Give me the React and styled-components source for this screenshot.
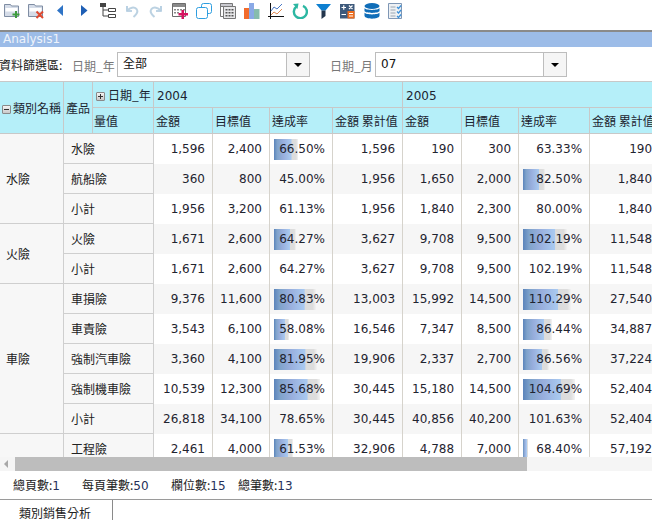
import React from "react";
import styled, { createGlobalStyle } from "styled-components";

const GlobalStyle = createGlobalStyle`
  html, body {
    margin: 0;
    padding: 0;
    background: #fff;
    overflow: hidden;
  }
  body {
    font-family: "DejaVu Sans", "Noto Sans CJK TC", sans-serif;
    font-size: 12px;
    color: #222;
  }
`;

const Page = styled.div`
  width: 652px;
  height: 520px;
  display: flex;
  flex-direction: column;
  overflow: hidden;
`;

const Toolbar = styled.div`
  height: 32px;
  flex: none;
  display: flex;
  align-items: flex-start;
  padding-top: 3px;
  box-sizing: border-box;
  border-bottom: 2px solid #8a8a8a;
`;

const ToolSlot = styled.span`
  width: 24px;
  height: 16px;
  flex: none;
  display: flex;
  justify-content: center;
  svg {
    display: block;
    width: 16px;
    height: 16px;
  }
`;

const TitleBar = styled.div`
  height: 15px;
  flex: none;
  background: #9cbce8;
  color: #eef3fb;
  padding-left: 3px;
  line-height: 15px;
  font-size: 12px;
`;

const FilterRow = styled.div`
  height: 34px;
  flex: none;
  display: flex;
  align-items: center;
  box-sizing: border-box;
  padding-top: 1px;
`;

const FilterTitle = styled.span`
  width: 73px;
  margin-left: -1px;
  flex: none;
  font-family: "Noto Sans CJK TC", sans-serif;
  white-space: nowrap;
  color: #222;
`;

const FilterLabel = styled.span`
  flex: none;
  width: ${(p) => p.$w}px;
  margin-left: ${(p) => p.$ml || 0}px;
  padding-top: 1px;
  font-family: "Noto Sans CJK TC", sans-serif;
  color: #777;
  white-space: nowrap;
`;

const SelectBox = styled.div`
  width: ${(p) => p.$w}px;
  height: 25px;
  flex: none;
  box-sizing: border-box;
  border: 1px solid #bdbdbd;
  display: flex;
  background: #fff;
`;

const SelectValue = styled.span`
  flex: 1;
  padding-left: 5px;
  line-height: 23px;
  font-family: "DejaVu Sans", "Noto Sans CJK TC", sans-serif;
  color: #111;
`;

const SelectButton = styled.span`
  width: 22px;
  flex: none;
  border-left: 1px solid #bdbdbd;
  background: #f5f5f5;
  display: flex;
  align-items: center;
  justify-content: center;
  &::after {
    content: "";
    border-left: 4px solid transparent;
    border-right: 4px solid transparent;
    border-top: 4px solid #000;
  }
`;

const GridWrap = styled.div`
  height: 375px;
  flex: none;
  overflow: hidden;
  border-top: 1px solid #c8c8c8;
`;

const Grid = styled.table`
  border-collapse: separate;
  border-spacing: 0;
  table-layout: fixed;
  width: 660px;
  font-size: 12px;
`;

const HeadCell = styled.th`
  height: 25px;
  padding: 0 0 0 ${(p) => p.$pl ?? 3}px;
  box-sizing: content-box;
  background: #b5eff9;
  border-right: 1px solid #c8c8c8;
  border-bottom: 1px solid #c8c8c8;
  font-weight: normal;
  text-align: left;
  white-space: nowrap;
  overflow: hidden;
  color: #1c2430;
  font-family: "Noto Sans CJK TC", sans-serif;
`;

const YearText = styled.span`
  font-family: "DejaVu Sans", sans-serif;
`;

const Toggle = styled.span`
  display: inline-block;
  width: 9px;
  height: 9px;
  box-sizing: border-box;
  border: 1px solid #8a8a8a;
  border-radius: 1px;
  background: linear-gradient(#f4f4f4, #c9c9c9);
  margin-right: ${(p) => p.$mr}px;
  vertical-align: -1px;
  position: relative;
  &::before {
    content: "";
    position: absolute;
    left: 1px;
    right: 1px;
    top: 3px;
    height: 1px;
    background: #333;
  }
  &::after {
    content: "";
    display: ${(p) => (p.$plus ? "block" : "none")};
    position: absolute;
    top: 1px;
    bottom: 1px;
    left: 3px;
    width: 1px;
    background: #333;
  }
`;

const GroupCell = styled.td`
  padding: 0 0 0 6px;
  background: #f7f7f7;
  border-right: 1px solid #cfcfcf;
  border-bottom: 1px solid #cfcfcf;
  font-family: "Noto Sans CJK TC", sans-serif;
  vertical-align: middle;
`;

const ProductCell = styled.td`
  height: 29px;
  padding: 0 0 0 7px;
  background: #f7f7f7;
  border-right: 1px solid #cfcfcf;
  border-bottom: 1px solid #cfcfcf;
  font-family: "Noto Sans CJK TC", sans-serif;
  white-space: nowrap;
`;

const NumCell = styled.td`
  padding: 0 7px 0 0;
  text-align: right;
  white-space: nowrap;
  color: #1f2430;
  border-right: 1px solid #d6d3cc;
  background-color: ${(p) => (p.$odd ? "#f6f6f6" : "#fff")};
  background-repeat: no-repeat;
  background-position: 4px center;
  background-image: ${(p) =>
    p.$bar
      ? "linear-gradient(90deg, #5b84bb 0%, #7fa3cb 14%, #98aedd 38%, #a9caf1 72%, #dcdcdc 74%, #dddddd 92%, #f3f3f3 100%)"
      : "none"};
  background-size: ${(p) => (p.$bar ? `${p.$bar}px 21px` : "auto")};
`;

const ScrollBar = styled.div`
  height: 14px;
  flex: none;
  display: flex;
  background: #f5f5f5;
`;

const ScrollArrow = styled.span`
  width: 15px;
  flex: none;
  display: flex;
  align-items: center;
  padding-left: 4px;
  box-sizing: border-box;
  &::before {
    content: "";
    border-top: 4px solid transparent;
    border-bottom: 4px solid transparent;
    border-right: 4px solid #a8a8a8;
  }
`;

const ScrollThumb = styled.span`
  width: 512px;
  flex: none;
  background: #bdbdbd;
`;

const StatusBar = styled.div`
  height: 29px;
  flex: none;
  display: flex;
  align-items: center;
  padding-left: 13px;
  box-sizing: border-box;
  padding-bottom: 2px;
  font-family: "Noto Sans CJK TC", sans-serif;
  border-bottom: 1px solid #9a9a9a;
`;

const StatusItem = styled.span`
  width: ${(p) => p.$w}px;
  flex: none;
  white-space: nowrap;
  b {
    font-weight: normal;
    font-family: "DejaVu Sans", sans-serif;
    color: #25305a;
  }
`;

const TabBar = styled.div`
  flex: 1;
  display: flex;
`;

const Tab = styled.div`
  width: 113px;
  box-sizing: border-box;
  padding: 6px 0 0 19px;
  border-right: 1px solid #8a8a8a;
  font-family: "Noto Sans CJK TC", sans-serif;
  white-space: nowrap;
  line-height: 14px;
`;

const colWidths = [64, 29, 61, 59, 57, 63, 70, 59, 57, 71, 70];

const rows = [
  { group: "水險", span: 3, name: "水險", a: ["1,596", "2,400", "66.50%", "1,596"], b: ["190", "300", "63.33%", "190"], barA: 24 },
  { name: "航船險", a: ["360", "800", "45.00%", "1,956"], b: ["1,650", "2,000", "82.50%", "1,840"], barB: 22 },
  { name: "小計", a: ["1,956", "3,200", "61.13%", "1,956"], b: ["1,840", "2,300", "80.00%", "1,840"] },
  { group: "火險", span: 2, name: "火險", a: ["1,671", "2,600", "64.27%", "3,627"], b: ["9,708", "9,500", "102.19%", "11,548"], barA: 22, barB: 44 },
  { name: "小計", a: ["1,671", "2,600", "64.27%", "3,627"], b: ["9,708", "9,500", "102.19%", "11,548"] },
  { group: "車險", span: 5, name: "車損險", a: ["9,376", "11,600", "80.83%", "13,003"], b: ["15,992", "14,500", "110.29%", "27,540"], barA: 42, barB: 48 },
  { name: "車責險", a: ["3,543", "6,100", "58.08%", "16,546"], b: ["7,347", "8,500", "86.44%", "34,887"], barA: 15, barB: 29 },
  { name: "強制汽車險", a: ["3,360", "4,100", "81.95%", "19,906"], b: ["2,337", "2,700", "86.56%", "37,224"], barA: 43, barB: 26 },
  { name: "強制機車險", a: ["10,539", "12,300", "85.68%", "30,445"], b: ["15,180", "14,500", "104.69%", "52,404"], barA: 46, barB: 52 },
  { name: "小計", a: ["26,818", "34,100", "78.65%", "30,445"], b: ["40,856", "40,200", "101.63%", "52,404"] },
  { group: "", span: 2, name: "工程險", a: ["2,461", "4,000", "61.53%", "32,906"], b: ["4,788", "7,000", "68.40%", "57,192"], barA: 19, barB: 5 },
];

const measures = ["金額", "目標值", "達成率", "金額 累計值"];

const icons = [
  <svg viewBox="0 0 16 16" key="add">
    <path d="M0.500 1.500h6l1 1.500h7v10.500h-14z" fill="#d5dce8" stroke="#7f8da3" />
    <path d="M1.500 5h12v3.500H1.500z" fill="#fff" />
    <path d="M11 8h2v2.500h2.500v2H13V15h-2v-2.500H8.500v-2H11z" fill="#3f9b3f" />
  </svg>,
  <svg viewBox="0 0 16 16" key="del">
    <path d="M0.500 1.500h6l1 1.500h7v10.500h-14z" fill="#d5dce8" stroke="#7f8da3" />
    <path d="M1.500 5h12v3.500H1.500z" fill="#fff" />
    <path d="M8.500 8.500l6.500 6.500M15 8.500l-6.500 6.500" stroke="#e0492f" strokeWidth="2" />
  </svg>,
  <svg viewBox="0 0 16 16" key="prev">
    <path d="M11 2v11L5 7.500z" fill="#2f74c6" />
  </svg>,
  <svg viewBox="0 0 16 16" key="next">
    <path d="M5 2v11l6.500-5.500z" fill="#1f5fb5" />
  </svg>,
  <svg viewBox="0 0 16 16" key="tree">
    <path d="M0 0h6v4H0z" fill="#444" />
    <path d="M3 4v9h5M3 7h5" stroke="#444" fill="none" />
    <path d="M8.500 5.500h7v3h-7zM8.500 11.500h7v3h-7z" fill="#fff" stroke="#444" />
  </svg>,
  <svg viewBox="0 0 16 16" key="undo">
    <path d="M3 3v5h5" fill="none" stroke="#a9c6dd" strokeWidth="1.600" />
    <path d="M3.500 7.500C6 4.500 10 3.500 12.500 6c2 2.500 0 5.500-3 8" fill="none" stroke="#bcd2e2" strokeWidth="2" />
  </svg>,
  <svg viewBox="0 0 16 16" key="redo">
    <path d="M13 3v5H8" fill="none" stroke="#a9c6dd" strokeWidth="1.600" />
    <path d="M12.500 7.500C10 4.500 6 3.500 3.500 6c-2 2.500 0 5.500 3 8" fill="none" stroke="#bcd2e2" strokeWidth="2" />
  </svg>,
  <svg viewBox="0 0 16 16" key="addtable">
    <path d="M0.500 0.500h13v13h-13z" fill="#fff" stroke="#6c6c6c" />
    <path d="M1 1h12v3H1z" fill="#8a8a8a" />
    <path d="M2 6h2v1.500H2zM5 6h2v1.500H5zM8 6h2v1.500H8zM11 6h2v1.500h-2zM2 9h2v1.500H2zM5 9h2v1.500H5z" fill="#8a8a8a" />
    <path d="M9.500 7h2.500v3h4v2.500h-4V16H9.500v-3.500h-3V10h3z" fill="#d5145f" />
  </svg>,
  <svg viewBox="0 0 16 16" key="copy">
    <rect x="5.500" y="0.500" width="10" height="10" rx="2" fill="#fff" stroke="#2e9ee0" />
    <rect x="0.500" y="4.500" width="11" height="11" rx="2" fill="#fff" stroke="#2e9ee0" />
  </svg>,
  <svg viewBox="0 0 16 16" key="grid">
    <path d="M0.500 0.500h12v3h-12z" fill="#c9c9cf" stroke="#777" />
    <path d="M0.500 0.500v13h3" fill="none" stroke="#777" />
    <path d="M3.500 3.500h12v12h-12z" fill="#e8e8ea" stroke="#777" />
    <path d="M5.500 6h2v1.500h-2zM8.500 6h2v1.500h-2zM11.500 6h2v1.500h-2zM5.500 9h2v1.500h-2zM8.500 9h2v1.500h-2zM11.500 9h2v1.500h-2zM5.500 12h2v1.500h-2zM8.500 12h2v1.500h-2zM11.500 12h2v1.500h-2z" fill="#555" />
  </svg>,
  <svg viewBox="0 0 16 16" key="bars">
    <path d="M0 5h5.500v11H0z" fill="#f26b2c" />
    <path d="M5 0h5v16H5z" fill="#8aa9e6" />
    <path d="M10 6h5.500v10H10z" fill="#86bcae" />
  </svg>,
  <svg viewBox="0 0 16 16" key="lines">
    <path d="M2.500 0v16M0 13.500h16" stroke="#111" fill="none" />
    <path d="M3 8l3-4 3 2 5-5" stroke="#4b78c4" fill="none" />
    <path d="M3 12l3-3 3 2 5-5" stroke="#e08a55" fill="none" />
  </svg>,
  <svg viewBox="0 0 16 16" key="refresh">
    <path d="M4.500 3.500A6.500 6.500 0 1 0 11 2.800" fill="none" stroke="#2cb7a2" strokeWidth="2.400" />
    <path d="M1 1l5.500-0.500L5.500 6z" fill="#2cb7a2" />
  </svg>,
  <svg viewBox="0 0 16 16" key="filter">
    <path d="M0 1h15L9.500 7.500H5.500z" fill="#0d7fd0" />
    <path d="M5.500 7.500h4V13l-4 3z" fill="#24364c" />
  </svg>,
  <svg viewBox="0 0 16 16" key="calc">
    <path d="M0 1h14.500v14.500H0z" fill="#3e5a7c" />
    <path d="M7.500 8h7v7.500h-7z" fill="#ee6c1c" />
    <path d="M1.500 4.500h4.500M3.750 2.200v4.600M9 2.500l3.500 3.500M12.500 2.500L9 6M1.500 11.500h4.500" stroke="#fff" strokeWidth="1.200" />
    <path d="M9 10.500h4M9 13h4" stroke="#fff" strokeWidth="1.200" />
  </svg>,
  <svg viewBox="0 0 16 16" key="db">
    <ellipse cx="8" cy="3" rx="7.500" ry="3" fill="#0f6db8" />
    <path d="M0.500 5c1 2.500 14 2.500 15 0v3c-1 2.500-14 2.500-15 0z" fill="#0f6db8" />
    <path d="M0.500 9.500c1 2.500 14 2.500 15 0V13c-1 3.500-14 3.500-15 0z" fill="#0f6db8" />
  </svg>,
  <svg viewBox="0 0 16 16" key="notes">
    <path d="M0.500 0.500h13v15h-13z" fill="#eef1f4" stroke="#7f97b5" />
    <path d="M2.500 4h5M2.500 7h5M2.500 10h5M2.500 13h5" stroke="#9aa6b2" />
    <path d="M9 4l1.500 1.500L13 2.500M9 8.500l1.500 1.500L13 7M9 13l1.500 1.500L13 11.500" stroke="#3a8fd8" fill="none" strokeWidth="1.200" />
  </svg>,
];

const Row = ({ row, index }) => {
  const odd = index % 2 === 1;
  return (
    <tr>
      {row.span ? <GroupCell rowSpan={row.span}>{row.group}</GroupCell> : null}
      <ProductCell colSpan={2}>{row.name}</ProductCell>
      {row.a.map((v, i) => (
        <NumCell key={i} $odd={odd} $bar={i === 2 ? row.barA : 0}>
          {v}
        </NumCell>
      ))}
      {row.b.map((v, i) => (
        <NumCell key={i} $odd={odd} $bar={i === 2 ? row.barB : 0}>
          {v}
        </NumCell>
      ))}
    </tr>
  );
};

const App = () => (
  <Page>
    <GlobalStyle />
    <Toolbar>
      {icons.map((icon) => (
        <ToolSlot key={icon.key}>{icon}</ToolSlot>
      ))}
    </Toolbar>
    <TitleBar>Analysis1</TitleBar>
    <FilterRow>
      <FilterTitle>資料篩選區:</FilterTitle>
      <FilterLabel $w={45}>日期_年</FilterLabel>
      <SelectBox $w={193}>
        <SelectValue>全部</SelectValue>
        <SelectButton />
      </SelectBox>
      <FilterLabel $w={45} $ml={20}>日期_月</FilterLabel>
      <SelectBox $w={192}>
        <SelectValue>07</SelectValue>
        <SelectButton />
      </SelectBox>
    </FilterRow>
    <GridWrap>
      <Grid>
        <colgroup>
          {colWidths.map((w, i) => (
            <col key={i} style={{ width: w }} />
          ))}
        </colgroup>
        <thead>
          <tr>
            <HeadCell rowSpan={2} $pl={2}>
              <Toggle $mr={2} />
              類別名稱
            </HeadCell>
            <HeadCell rowSpan={2} $pl={2}>產品</HeadCell>
            <HeadCell $pl={3}>
              <Toggle $plus $mr={3} />
              日期_年
            </HeadCell>
            <HeadCell colSpan={4}>
              <YearText>2004</YearText>
            </HeadCell>
            <HeadCell colSpan={4}>
              <YearText>2005</YearText>
            </HeadCell>
          </tr>
          <tr>
            <HeadCell $pl={1}>量值</HeadCell>
            {[...measures, ...measures].map((m, i) => (
              <HeadCell key={i} $pl={2}>{m}</HeadCell>
            ))}
          </tr>
        </thead>
        <tbody>
          {rows.map((row, i) => (
            <Row key={i} row={row} index={i} />
          ))}
        </tbody>
      </Grid>
    </GridWrap>
    <ScrollBar>
      <ScrollArrow />
      <ScrollThumb />
    </ScrollBar>
    <StatusBar>
      <StatusItem $w={69}>總頁數:<b>1</b></StatusItem>
      <StatusItem $w={89}>每頁筆數:<b>50</b></StatusItem>
      <StatusItem $w={67}>欄位數:<b>15</b></StatusItem>
      <StatusItem $w={70}>總筆數:<b>13</b></StatusItem>
    </StatusBar>
    <TabBar>
      <Tab>類別銷售分析</Tab>
    </TabBar>
  </Page>
);

export default App;
